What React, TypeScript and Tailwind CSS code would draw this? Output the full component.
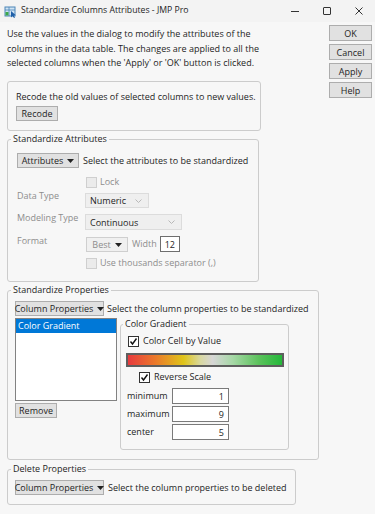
import React from "react";

const Tri = ({ color = "#222" }: { color?: string }) => (
  <svg width="7" height="4" viewBox="0 0 7 4" className="shrink-0">
    <polygon points="0,0 7,0 3.5,4" fill={color} />
  </svg>
);

const Chevron = () => (
  <svg width="7" height="4" viewBox="0 0 7 4" className="shrink-0">
    <polyline points="0.5,0.5 3.5,3.5 6.5,0.5" fill="none" stroke="#b8b8b8" strokeWidth="1" />
  </svg>
);

const Check = () => (
  <svg width="9" height="9" viewBox="0 0 9 9">
    <polyline points="1.5,4.5 3.5,7 7.5,1.5" fill="none" stroke="#111" strokeWidth="1.4" />
  </svg>
);

const CheckBox = ({ checked, disabled }: { checked?: boolean; disabled?: boolean }) =>
  disabled ? (
    <div className="w-[11px] h-[11px] border border-[#cfcfcf] bg-[#ebebeb] shrink-0" />
  ) : (
    <div className="w-[11px] h-[11px] border border-[#333] bg-white shrink-0 flex items-center justify-center">
      {checked && <Check />}
    </div>
  );

const SideBtn = ({ label }: { label: string }) => (
  <div className="h-[16px] w-[43px] border border-[#adadad] bg-[#e1e1e1] flex items-center justify-center leading-none">
    {label}
  </div>
);

const DropBtn = ({ label, w }: { label: string; w: string }) => (
  <div className={`h-[15px] ${w} border border-[#adadad] bg-[#e1e1e1] flex items-center justify-center gap-[4px] leading-none shrink-0 whitespace-nowrap`}>
    <span>{label}</span>
    <Tri />
  </div>
);

const Legend = ({ children, ml }: { children: React.ReactNode; ml: string }) => (
  <legend className={`${ml} px-[2px] leading-[14px] whitespace-nowrap`}>{children}</legend>
);

export default function App() {
  return (
    <div
      className="w-[375px] h-[514px] bg-[#f7f7f7] overflow-hidden text-[9px] text-[#1e1e1e]"
      style={{ fontFamily: '"Open Sans", "Noto Sans", sans-serif' }}
    >
      {/* Title bar */}
      <div className="h-[22px] bg-[#f3f3f3] flex items-center relative">
        <svg width="13" height="13" viewBox="0 0 13 13" className="ml-[4px]">
          <rect x="1" y="2" width="10" height="9" fill="#cfe3f3" stroke="#4d86b8" strokeWidth="1" />
          <line x1="1" y1="5" x2="11" y2="5" stroke="#4d86b8" strokeWidth="0.8" />
          <line x1="5" y1="2" x2="5" y2="11" stroke="#4d86b8" strokeWidth="0.8" />
          <rect x="1.5" y="7" width="3" height="3.5" fill="#3da84a" />
          <polygon points="7,6 7,12.5 8.6,11 10,13 11,12.4 9.7,10.5 11.8,10.3" fill="#1f5fa8" />
        </svg>
        <span className="ml-[4px] text-[8.7px]">Standardize Columns Attributes - JMP Pro</span>
        <div className="ml-auto flex items-center h-full">
          <div className="w-[32px] h-full flex items-center justify-center">
            <div className="w-[8px] h-px bg-[#333]" />
          </div>
          <div className="w-[32px] h-full flex items-center justify-center">
            <div className="w-[8px] h-[8px] border border-[#333] rounded-[1px]" />
          </div>
          <div className="w-[32px] h-full flex items-center justify-center">
            <svg width="8" height="8" viewBox="0 0 8 8">
              <line x1="0.5" y1="0.5" x2="7.5" y2="7.5" stroke="#333" strokeWidth="1" />
              <line x1="7.5" y1="0.5" x2="0.5" y2="7.5" stroke="#333" strokeWidth="1" />
            </svg>
          </div>
        </div>
      </div>

      <div className="flex">
        {/* Left column */}
        <div className="pl-[7px] w-[322px] shrink-0">
          <p className="mt-[5px] h-[44px] leading-[14.5px] whitespace-nowrap">
            Use the values in the dialog to modify the attributes of the
            <br />
            columns in the data table. The changes are applied to all the
            <br />
            selected columns when the 'Apply' or 'OK' button is clicked.
          </p>

          {/* Recode */}
          <div className="mt-[10px] w-[254px] h-[50px] border border-[#cccccc] rounded-[3px] pl-[8px] pt-[8px]">
            <div className="leading-[14px] whitespace-nowrap">Recode the old values of selected columns to new values.</div>
            <div className="mt-[2px] h-[15px] w-[42px] border border-[#adadad] bg-[#e1e1e1] flex items-center justify-center leading-none">
              Recode
            </div>
          </div>

          {/* Standardize Attributes */}
          <fieldset className="mt-[1px] w-[252px] border border-[#cccccc] rounded-[3px] pl-[9px] pt-[7px] pb-[11px]">
            <Legend ml="-ml-[6px]">Standardize Attributes</Legend>
            <div className="flex items-center h-[15px]">
              <DropBtn label="Attributes" w="w-[62px]" />
              <span className="ml-[4px] whitespace-nowrap">Select the attributes to be standardized</span>
            </div>
            <div className="mt-[7px] h-[14px] flex items-center pl-[69px] gap-[3px] text-[#8d8d8d]">
              <CheckBox disabled />
              <span>Lock</span>
            </div>
            <div className="mt-[4px] flex items-start">
              <div className="w-[68px] -mt-[4px] leading-[14px] text-[#8d8d8d]">Data Type</div>
              <div className="h-[15px] w-[64px] border border-[#dcdcdc] bg-[#efefef] flex items-center justify-between pl-[4px] pr-[6px] leading-none">
                <span>Numeric</span>
                <Chevron />
              </div>
            </div>
            <div className="mt-[6px] flex items-start">
              <div className="w-[68px] -mt-[3px] leading-[14px] text-[#8d8d8d] whitespace-nowrap">Modeling Type</div>
              <div className="h-[16px] w-[97px] border border-[#dcdcdc] bg-[#efefef] flex items-center justify-between pl-[4px] pr-[6px] leading-none">
                <span>Continuous</span>
                <Chevron />
              </div>
            </div>
            <div className="mt-[6px] flex items-start">
              <div className="w-[69px] -mt-[2px] leading-[14px] text-[#8d8d8d]">Format</div>
              <div className="mt-[1px] h-[15px] w-[42px] border border-[#cfcfcf] bg-[#f0f0f0] flex items-center justify-center gap-[4px] leading-none">
                <span className="text-[#8d8d8d]">Best</span>
                <Tri />
              </div>
              <span className="ml-[4px] mt-[1px] leading-[14px] text-[#8d8d8d]">Width</span>
              <div className="ml-[3px] h-[16px] w-[20px] border border-[#6e6e6e] bg-white flex items-center justify-center leading-none">
                12
              </div>
            </div>
            <div className="mt-[4px] h-[14px] flex items-center pl-[69px] gap-[3px] text-[#8d8d8d]">
              <CheckBox disabled />
              <span className="whitespace-nowrap">Use thousands separator (,)</span>
            </div>
          </fieldset>

          {/* Standardize Properties */}
          <fieldset className="mt-[1px] w-[312px] border border-[#cccccc] rounded-[3px] pl-[7px] pt-[4px] pb-[9px]">
            <Legend ml="-ml-[4px]">Standardize Properties</Legend>
            <div className="flex items-center h-[15px]">
              <DropBtn label="Column Properties" w="w-[89px]" />
              <span className="ml-[3px] whitespace-nowrap">Select the column properties to be standardized</span>
            </div>
            <div className="flex items-start">
              <div className="mt-[2px] w-[102px] shrink-0">
                <div className="h-[83px] border border-[#828282] bg-white">
                  <div className="h-[14px] bg-[#0078d7] text-white leading-[14px] pl-[2px]">Color Gradient</div>
                </div>
                <div className="mt-[2px] h-[15px] w-[42px] border border-[#adadad] bg-[#e1e1e1] flex items-center justify-center leading-none">
                  Remove
                </div>
              </div>
              <fieldset className="mt-[1px] ml-[3px] w-[169px] border border-[#cccccc] rounded-[3px] pl-[6px] pt-[3px] pb-[9px]">
                <Legend ml="-ml-[4px]">Color Gradient</Legend>
                <div className="h-[14px] flex items-center gap-[4px] pl-[1px]">
                  <CheckBox checked />
                  <span>Color Cell by Value</span>
                </div>
                <div
                  className="mt-[5px] -ml-[1px] h-[14px] w-[158px] border-2 border-[#5e5e5e]"
                  style={{
                    background:
                      "linear-gradient(to right, #e83a3e 0%, #ea7a2a 18%, #dfc419 36%, #d8d8a0 47%, #d6d6d6 55%, #a6d8a6 68%, #5cc25c 85%, #24b83a 100%)",
                  }}
                />
                <div className="mt-[3px] h-[14px] flex items-center gap-[4px] pl-[12px]">
                  <CheckBox checked />
                  <span>Reverse Scale</span>
                </div>
                {[
                  ["minimum", "1"],
                  ["maximum", "9"],
                  ["center", "5"],
                ].map(([l, v], i) => (
                  <div key={l} className={`${i === 0 ? "mt-[4px]" : "mt-[2px]"} flex items-center`}>
                    <span className="w-[45px] leading-[14px]">{l}</span>
                    <div className="h-[16px] w-[57px] border border-[#7a7a7a] bg-white flex items-center justify-end pr-[4px] leading-none">
                      {v}
                    </div>
                  </div>
                ))}
              </fieldset>
            </div>
          </fieldset>

          {/* Delete Properties */}
          <fieldset className="mt-[2px] w-[289px] border border-[#cccccc] rounded-[3px] pl-[7px] pt-[4px] pb-[9px]">
            <Legend ml="-ml-[4px]">Delete Properties</Legend>
            <div className="flex items-center h-[15px]">
              <DropBtn label="Column Properties" w="w-[89px]" />
              <span className="ml-[4px] whitespace-nowrap">Select the column properties to be deleted</span>
            </div>
          </fieldset>
        </div>

        {/* Right buttons */}
        <div className="ml-[7px] mt-[3px] flex flex-col gap-[3px]">
          <SideBtn label="OK" />
          <SideBtn label="Cancel" />
          <SideBtn label="Apply" />
          <SideBtn label="Help" />
        </div>
      </div>
    </div>
  );
}
